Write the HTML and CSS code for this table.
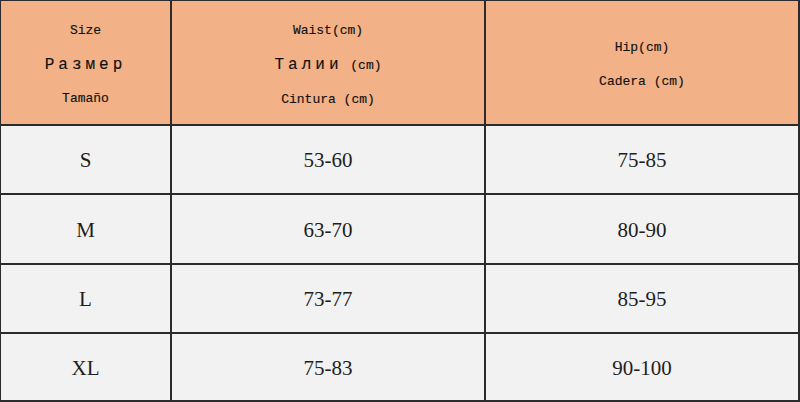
FILE: index.html
```html
<!DOCTYPE html>
<html>
<head>
<meta charset="utf-8">
<link rel="stylesheet" href="styles.css">
</head>
<body>
<div class="chart">
  <div class="cell head">
    <div class="hl">Size</div>
    <div class="hl cyr">Размер</div>
    <div class="hl">Tamaño</div>
  </div>
  <div class="cell head">
    <div class="hl">Waist(cm)</div>
    <div class="hl"><span class="cyr">Талии</span> (cm)</div>
    <div class="hl">Cintura (cm)</div>
  </div>
  <div class="cell head">
    <div class="hl">Hip(cm)</div>
    <div class="hl">Cadera (cm)</div>
  </div>

  <div class="cell">S</div><div class="cell">53-60</div><div class="cell">75-85</div>
  <div class="cell">M</div><div class="cell">63-70</div><div class="cell">80-90</div>
  <div class="cell">L</div><div class="cell">73-77</div><div class="cell">85-95</div>
  <div class="cell">XL</div><div class="cell">75-83</div><div class="cell">90-100</div>
</div>
</body>
</html>
```

FILE: styles.css
```css
html, body {
  margin: 0;
  padding: 0;
  background: #ffffff;
}

.chart {
  width: 800px;
  height: 402px;
  box-sizing: border-box;
  padding: 1px 2px 2px 1px;
  background: #2b2b2b;
  display: grid;
  grid-template-columns: 169px 312px 312px;
  grid-template-rows: 123px 67px 68px 67px 66px;
  gap: 2px;
}

.cell {
  background: #f2f2f2;
  display: flex;
  flex-direction: column;
  align-items: center;
  justify-content: center;
  padding-top: 2px;
  font-family: "Liberation Serif", "Times New Roman", serif;
  font-size: 21px;
  color: #1e1e1e;
}

.cell.head {
  background: #f2b187;
  font-family: "Liberation Mono", "Courier New", monospace;
  font-size: 13px;
  color: #111;
  gap: 16px;
  line-height: 18px;
  padding-top: 5px;
  -webkit-text-stroke: 0.15px #111;
}

.hl {
  white-space: pre;
}

.cyr {
  font-size: 16px;
  letter-spacing: 4px;
}
```
